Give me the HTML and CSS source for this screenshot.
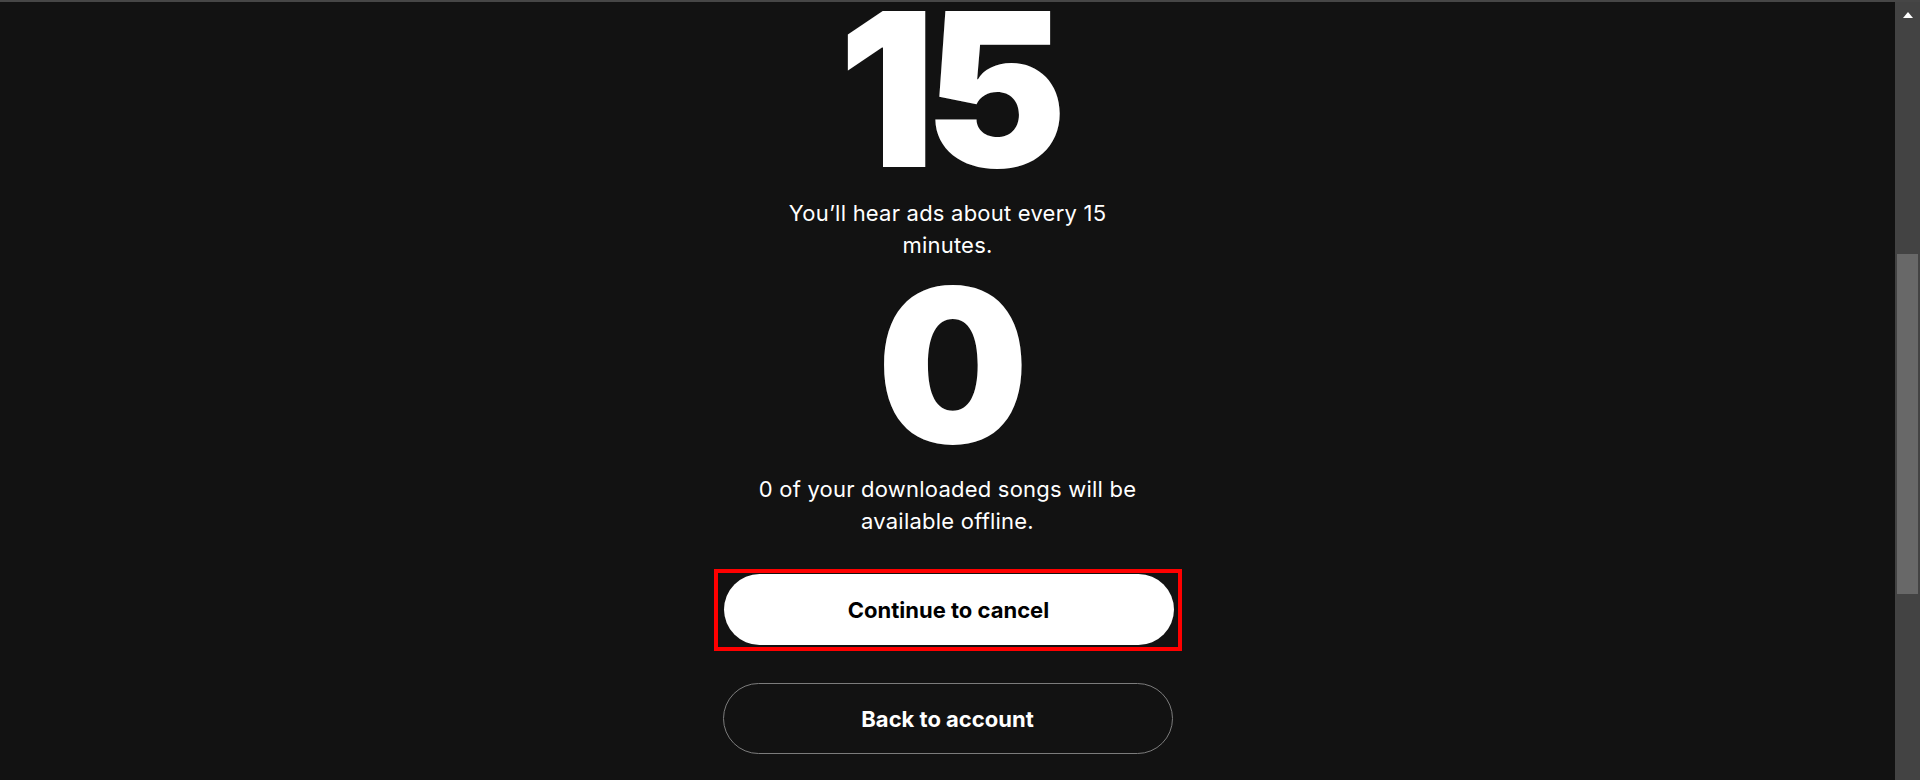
FILE: index.html
```html
<!DOCTYPE html>
<html lang="en">
<head>
  <meta charset="UTF-8" />
  <meta name="viewport" content="width=device-width, initial-scale=1.0" />
  <title>Cancel Premium</title>
  <link rel="stylesheet" href="styles.css">
</head>
<body>
  <div class="frame">
    <main class="page">
      <section class="stat">
        <div class="stat-number">15</div>
        <p class="stat-text">You’ll hear ads about every 15 minutes.</p>
      </section>

      <section class="stat">
        <div class="stat-number">0</div>
        <p class="stat-text">0 of your downloaded songs will be available offline.</p>
      </section>

      <div class="actions">
        <div class="highlight">
          <button class="btn btn-primary">Continue to cancel</button>
        </div>
        <button class="btn btn-secondary">Back to account</button>
      </div>
    </main>

    <div class="scrollbar">
      <span class="scroll-arrow"></span>
      <span class="scroll-thumb"></span>
    </div>
  </div>
</body>
</html>
```

FILE: styles.css
```css
:root {
  --bg-color: #121212;
  --text-color: #ffffff;
  --subdued: #7c7c7c;
  --highlight: #ff0000;
}

html, body {
  height: 100%;
}

body {
  margin: 0;
  font-family: Inter, 'Noto Sans', sans-serif;
  background-color: var(--bg-color);
  color: var(--text-color);
  overflow: hidden;
}

.frame {
  display: flex;
  height: 780px;
  border-top: 2px solid #464646;
  box-sizing: border-box;
}

.page {
  flex: 1;
  display: flex;
  flex-direction: column;
  align-items: center;
  overflow: hidden;
}

.stat {
  display: flex;
  flex-direction: column;
  align-items: center;
}

.stat:first-child {
  margin-top: 3px;
}

.stat + .stat {
  margin-top: 20px;
}

.stat-number {
  font-size: 214px;
  line-height: 170px;
  font-weight: 900;
  letter-spacing: -0.05em;
}

.stat-text {
  margin: 22px 0 0;
  max-width: 400px;
  font-size: 22px;
  line-height: 32px;
  letter-spacing: 0.01em;
  text-align: center;
}

.actions {
  margin-top: 32px;
  display: flex;
  flex-direction: column;
  align-items: center;
  gap: 32px;
}

.highlight {
  border: 4px solid var(--highlight);
  padding: 1px 4px 2px 6px;
}

.btn {
  display: block;
  width: 450px;
  height: 71px;
  border-radius: 36px;
  font-family: inherit;
  font-size: 22px;
  font-weight: 700;
  cursor: pointer;
}

.btn-primary {
  background: #ffffff;
  color: #000000;
  border: none;
}

.btn-secondary {
  background: transparent;
  color: #ffffff;
  border: 1px solid var(--subdued);
}

.scrollbar {
  width: 25px;
  background: #434343;
  display: flex;
  flex-direction: column;
  align-items: center;
}

.scroll-arrow {
  margin-top: 10px;
  width: 0;
  height: 0;
  border-left: 5.5px solid transparent;
  border-right: 5.5px solid transparent;
  border-bottom: 6px solid #ffffff;
}

.scroll-thumb {
  margin-top: 236px;
  width: 21px;
  height: 340px;
  background: #686868;
}
```
